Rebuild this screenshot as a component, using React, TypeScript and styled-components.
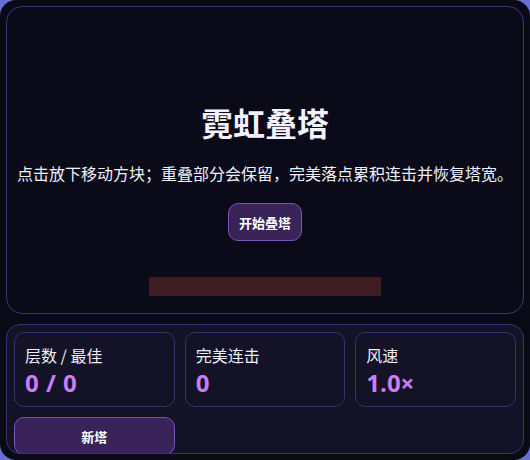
import React from "react";
import styled, { createGlobalStyle } from "styled-components";

const GlobalStyle = createGlobalStyle`
  html, body {
    margin: 0;
    padding: 0;
    height: 460px;
    background: #6770d2;
  }
  * {
    box-sizing: border-box;
  }
`;

const Frame = styled.div`
  height: 460px;
  padding: 6px;
  border-radius: 16px;
  background: #0a0a16;
  display: flex;
  flex-direction: column;
  gap: 10px;
  font-family: "Noto Sans CJK SC", "Noto Sans", sans-serif;
  color: #f1f0ff;
`;

const Stage = styled.section`
  height: 308px;
  flex: none;
  border: 1px solid #3f3577;
  border-radius: 16px;
  background: #0a0a18;
  display: flex;
  flex-direction: column;
  align-items: center;
  justify-content: flex-end;
  padding-bottom: 17px;
`;

const Title = styled.h1`
  margin: 0;
  font-size: 32px;
  line-height: 38px;
  font-weight: 700;
  color: #f4f2ff;
`;

const Hint = styled.p`
  margin: 20px 0 0;
  font-size: 16px;
  line-height: 24px;
  white-space: nowrap;
  color: #f1f0ff;
`;

const ActionButton = styled.button<{ $wide?: boolean }>`
  font-family: inherit;
  font-size: 13px;
  font-weight: 700;
  color: #ffffff;
  background: #3a2358;
  border: 1px solid #7a55b4;
  border-radius: 10px;
  height: 38px;
  padding: 0 ${(p) => (p.$wide ? "0" : "10px")};
  width: ${(p) => (p.$wide ? "100%" : "auto")};
  cursor: pointer;
`;

const StartButton = styled(ActionButton)`
  margin-top: 18px;
`;

const Base = styled.div`
  margin-top: 36px;
  width: 232px;
  height: 19px;
  background: #3e1c22;
`;

const Stats = styled.section`
  flex: 1;
  min-height: 0;
  overflow: hidden;
  border: 1px solid #3b3272;
  border-radius: 14px;
  background: #131226;
  padding: 7px;
  display: grid;
  grid-template-columns: repeat(3, 1fr);
  column-gap: 10px;
  row-gap: 10px;
  align-content: start;
`;

const Card = styled.div`
  height: 75px;
  border: 1px solid #3a3268;
  border-radius: 10px;
  padding: 12px 10px 0;
`;

const Label = styled.div`
  font-size: 16px;
  line-height: 20px;
  color: #eeeef8;
`;

const Value = styled.div`
  margin-top: 4px;
  font-family: "Open Sans", "Noto Sans CJK SC", sans-serif;
  font-size: 24px;
  line-height: 28px;
  font-weight: 700;
  word-spacing: 1px;
  color: #c97ef6;
`;

const stats = [
  { label: "层数 / 最佳", value: "0 / 0" },
  { label: "完美连击", value: "0" },
  { label: "风速", value: "1.0×" },
];

const App: React.FC = () => {
  return (
    <>
      <GlobalStyle />
      <Frame>
        <Stage>
          <Title>霓虹叠塔</Title>
          <Hint>点击放下移动方块；重叠部分会保留，完美落点累积连击并恢复塔宽。</Hint>
          <StartButton>开始叠塔</StartButton>
          <Base />
        </Stage>
        <Stats>
          {stats.map((s) => (
            <Card key={s.label}>
              <Label>{s.label}</Label>
              <Value>{s.value}</Value>
            </Card>
          ))}
          <ActionButton $wide>新塔</ActionButton>
        </Stats>
      </Frame>
    </>
  );
};

export default App;
